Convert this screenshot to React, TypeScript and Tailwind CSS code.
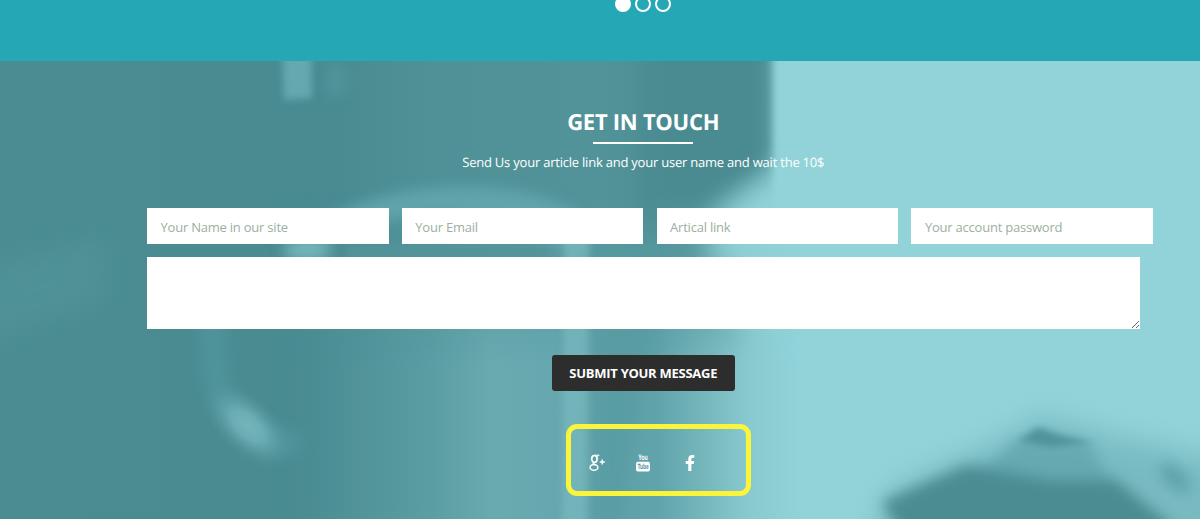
import { FaFacebookF } from "react-icons/fa"

const fields = ["Your Name in our site", "Your Email", "Artical link", "Your account password"]

function GooglePlusIcon() {
    return (
        <svg width="16" height="18" viewBox="0 0 16 18" fill="none" stroke="white">
            <ellipse cx="5.4" cy="4.9" rx="2.7" ry="3.4" strokeWidth="1.7" />
            <path d="M5.2 1.2h5L8.4 2.4H6.5" strokeWidth="1" />
            <path d="M4.8 8.2c-1.4 1.2-.2 1.9 1.6 2.8" strokeWidth="1.6" />
            <ellipse cx="5" cy="13.4" rx="3.9" ry="2.9" strokeWidth="1.5" />
            <path d="M10.8 8h5M13.3 5.5v5" strokeWidth="1.4" />
        </svg>
    )
}

function YoutubeIcon() {
    return (
        <svg width="16" height="22" viewBox="0 -2 16 22" fontFamily="'Liberation Sans', sans-serif" fontWeight="700">
            <text x="3.2" y="6.4" fontSize="8" textLength="9.6" lengthAdjust="spacingAndGlyphs" fill="white">You</text>
            <rect x="1" y="7.8" width="14" height="9.8" rx="2" fill="white" />
            <text x="2.4" y="15.4" fontSize="7.6" textLength="11.2" lengthAdjust="spacingAndGlyphs" fill="#4f9197">Tube</text>
        </svg>
    )
}

// blurred desk photo with the teal overlay
function Backdrop() {
    return (
        <svg className="absolute inset-0 h-full w-full" viewBox="0 61 1200 458" preserveAspectRatio="none">
            <defs>
                <linearGradient id="base" gradientUnits="userSpaceOnUse" x1="0" y1="0" x2="1200" y2="0">
                    <stop offset="0" stopColor="#4a8c92" />
                    <stop offset="0.28" stopColor="#498b91" />
                    <stop offset="0.36" stopColor="#4f9197" />
                    <stop offset="0.5" stopColor="#529399" />
                    <stop offset="0.58" stopColor="#4b8c92" />
                    <stop offset="1" stopColor="#4b8c92" />
                </linearGradient>
                <linearGradient id="mug" gradientUnits="userSpaceOnUse" x1="270" y1="0" x2="800" y2="0">
                    <stop offset="0" stopColor="#498b91" stopOpacity="0" />
                    <stop offset="0.14" stopColor="#4f9197" />
                    <stop offset="0.3" stopColor="#5a9da3" />
                    <stop offset="0.42" stopColor="#69aab0" />
                    <stop offset="0.53" stopColor="#67a8b0" />
                    <stop offset="0.6" stopColor="#60a1a8" />
                    <stop offset="0.73" stopColor="#60a3aa" />
                    <stop offset="0.82" stopColor="#76b7bd" />
                    <stop offset="0.9" stopColor="#88c9cf" />
                    <stop offset="1" stopColor="#91d3d9" />
                </linearGradient>
                <linearGradient id="fade" x1="0" y1="0" x2="0" y2="1">
                    <stop offset="0" stopColor="#000" />
                    <stop offset="0.45" stopColor="#fff" />
                </linearGradient>
                <radialGradient id="spot">
                    <stop offset="0" stopColor="#74b5bb" />
                    <stop offset="0.35" stopColor="#6fb0b7" stopOpacity="0.9" />
                    <stop offset="1" stopColor="#529499" stopOpacity="0" />
                </radialGradient>
                <mask id="mugMask" maskUnits="userSpaceOnUse" x="200" y="190" width="650" height="390">
                    <rect x="200" y="190" width="650" height="390" fill="url(#fade)" />
                </mask>
                <filter id="b3" x="-50%" y="-50%" width="200%" height="200%" colorInterpolationFilters="sRGB"><feGaussianBlur stdDeviation="3.5" /></filter>
                <filter id="b6" x="-50%" y="-50%" width="200%" height="200%" colorInterpolationFilters="sRGB"><feGaussianBlur stdDeviation="7" /></filter>
                <filter id="b12" x="-50%" y="-50%" width="200%" height="200%" colorInterpolationFilters="sRGB"><feGaussianBlur stdDeviation="14" /></filter>
            </defs>
            <rect y="61" width="1200" height="458" fill="url(#base)" />

            {/* left side haze */}
            <path d="M-40 275L110 235L105 300L-40 350Z" fill="#529499" opacity="0.7" filter="url(#b12)" />
            <path d="M281 20H311L312 98L284 100Z" fill="#65a8af" filter="url(#b3)" />
            <ellipse cx="336" cy="80" rx="10" ry="18" fill="#559aa0" opacity="0.7" filter="url(#b6)" />

            {/* bright wall */}
            <path d="M776 20H1260V560H775L745 330L705 245C710 200 750 190 775 165Z" fill="#92d3d9" filter="url(#b12)" />
            <path d="M773 20H1260V250H775L773 170Z" fill="#92d3d9" filter="url(#b3)" />
            <path d="M640 40H766V158C735 176 700 190 640 232Z" fill="#4a8b91" opacity="0.75" filter="url(#b6)" />

            {/* mug */}
            <g mask="url(#mugMask)">
                <rect x="270" y="190" width="530" height="400" fill="url(#mug)" />
            </g>
            <path d="M310 236C350 184 510 168 575 212L592 245L560 250C500 205 390 205 315 246Z" fill="#62a4ac" filter="url(#b6)" />
            <ellipse cx="307" cy="250" rx="24" ry="12" fill="#74b5bb" filter="url(#b6)" />
            <path d="M345 246H550V258H345Z" fill="#529499" filter="url(#b3)" />
            <path d="M564 218H590L588 540H562Z" fill="#7cbdc3" opacity="0.65" filter="url(#b3)" />
            <path d="M594 245H690L660 290L615 560H594Z" fill="#559aa0" opacity="0.55" filter="url(#b6)" />

            {/* handle */}
            <path d="M216 290C207 390 215 426 300 446" stroke="#579da4" strokeWidth="24" opacity="0.5" fill="none" filter="url(#b6)" />
            <ellipse cx="248" cy="426" rx="56" ry="29" transform="rotate(43 248 426)" fill="url(#spot)" />

            {/* book on the desk */}
            <path d="M890 490L1010 435L1040 415L1110 435L1250 465V550H870Z" fill="#69abb2" opacity="0.6" filter="url(#b12)" />
            <path d="M1016 440L1090 443L1110 482L980 474Z" fill="#62a4ac" opacity="0.75" filter="url(#b6)" />
            <path d="M882 502L967 465L1050 478L1115 479L1190 540H905Z" fill="#4b8c92" filter="url(#b6)" />
            <path d="M1018 441L1038 427L1060 435L1093 443L1050 447Z" fill="#4b8d93" opacity="0.85" filter="url(#b3)" />
            <ellipse cx="1175" cy="478" rx="19" ry="9" transform="rotate(42 1175 478)" fill="#5fa1a8" filter="url(#b6)" />
        </svg>
    )
}

export default function App() {
    return (
        <div className="h-[519px] w-[1200px] overflow-hidden font-['Open_Sans',sans-serif] [text-rendering:geometricPrecision]">
            <div className="flex h-[61px] justify-center gap-1 bg-[#25a7b5] pl-[86px]">
                <span className="-mt-1 h-4 w-4 rounded-full bg-white" />
                <span className="-mt-1 h-4 w-4 rounded-full border-2 border-white" />
                <span className="-mt-1 h-4 w-4 rounded-full border-2 border-white" />
            </div>

            <section className="relative h-[458px] overflow-hidden">
                <Backdrop />
                <div className="relative ml-[147px] flex w-[992.5px] flex-col items-center pt-[45px]">
                    <h2 className="text-[22px] leading-8 font-bold tracking-[-0.27px] text-white">GET IN TOUCH</h2>
                    <div className="mt-1 h-[2px] w-[100px] bg-white" />
                    <p className="mt-[7px] text-[13px] leading-[22px] tracking-[-0.22px] text-white">
                        Send Us your article link and your user name and wait the 10$
                    </p>

                    <form className="mt-[35px] flex w-full flex-col items-center" onSubmit={(e) => e.preventDefault()}>
                        <div className="grid w-[1006px] shrink-0 grid-cols-4 gap-[13.2px] self-start">
                            {fields.map((label) => (
                                <input
                                    key={label}
                                    placeholder={label}
                                    className="h-9 w-full min-w-0 bg-white pt-px pr-[13px] pl-[13.5px] text-[13px] tracking-[-0.22px] outline-none placeholder:text-[#9bb0a0]"
                                />
                            ))}
                        </div>
                        <textarea className="mt-[13px] block h-[72px] w-full resize bg-white p-3 text-[13px] outline-none" />
                        <button className="mt-[26px] h-9 w-[183px] rounded-[3px] bg-[#2d2d2d] pt-px text-[13px] font-bold tracking-[-0.27px] whitespace-nowrap text-white">
                            SUBMIT YOUR MESSAGE
                        </button>
                    </form>

                    <div className="mt-[33px] ml-[30px] flex h-[72px] w-[185px] items-center rounded-[11px] border-[5px] border-[#faf53a] pt-[5px] pl-[18px] text-white">
                        <GooglePlusIcon />
                        <div className="ml-[30px]"><YoutubeIcon /></div>
                        <FaFacebookF className="ml-[31px] h-4 w-4" />
                    </div>
                </div>
            </section>
        </div>
    )
}
